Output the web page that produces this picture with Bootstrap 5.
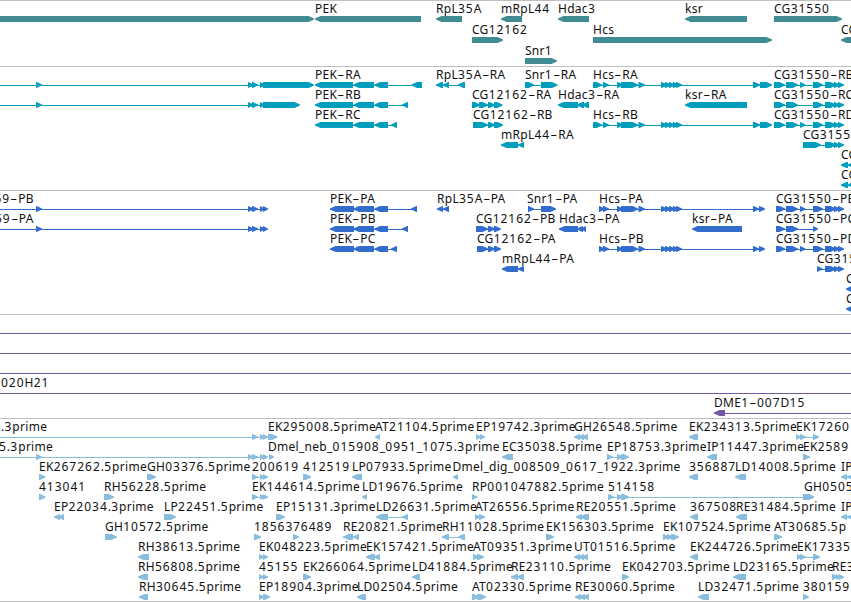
<!DOCTYPE html>
<html lang="en">
<head>
    <meta charset="UTF-8">
    <meta name="viewport" content="width=device-width, initial-scale=1.0">
    <title>Genome Browser</title>
    <!-- Bootstrap CSS -->
    <link href="https://cdn.jsdelivr.net/npm/bootstrap@5.3.0/dist/css/bootstrap.min.css" rel="stylesheet">
    <style>
        body {
            font-family: "Noto Sans", "Open Sans", sans-serif;
            font-size: 12px;
            line-height: 16px;
            color: #111;
        }
        .browser {
            width: 851px;
            height: 602px;
            border-bottom: 1px solid #bfbfbf;
        }
        .track {
            border-top: 1px solid #bfbfbf;
        }
        .track-row {
            height: 20px;
        }
        .track-row svg {
            left: 0;
            top: 0;
            width: 851px;
            height: 22px;
        }
        .track-genes .track-row { height: 21px; }
        .track-genes { height: 66px; fill: #408c92; }
        .track-transcripts { height: 124px; fill: #009ebd; }
        .track-proteins { height: 124px; fill: #326ccc; }
        .track-bacs { height: 104px; fill: #7157a5; }
        .track-ests { height: 183px; fill: #88bddd; }
        .feature-name {
            top: 0;
            letter-spacing: 0.28px;
            z-index: 1;
        }
        .digits { letter-spacing: 0.98px; }
        .dash {
            display: inline-block;
            width: 8px;
            text-align: center;
            transform: scaleX(1.8);
        }
    </style>
</head>
<body class="bg-white overflow-hidden">
    <main class="browser d-flex flex-column overflow-hidden">
        <section id="genes" class="track track-genes"></section>
        <section id="transcripts" class="track track-transcripts"></section>
        <section id="proteins" class="track track-proteins"></section>
        <section id="bacs" class="track track-bacs"></section>
        <section id="ests" class="track track-ests"></section>
    </main>

    <!-- Bootstrap JS and Popper -->
    <script src="https://cdn.jsdelivr.net/npm/bootstrap@5.3.0/dist/js/bootstrap.bundle.min.js"></script>
    <script>
        // Exons shared by several transcripts
        const left = '-20--10 36-42 248-253.5 252-258';
        const pek = '353.5-374 374.5-388';
        const hcs = '603-609 617-623 621-638 638.5-645 661-667 665-671 669-675 673-679 676-682';
        const tail = '825-836 834-840 838-844';
        const cg = '786-798 800-805.5 813-823 ' + tail;

        // One string per row, features split by ";": name | strand | exons | label x
        const tracks = {
            genes: [
                '|>|-20-314; PEK|<|315-421; RpL35A|<|436-462; mRpL44|<|501-522; Hdac3|<|558-589; ksr|<|685-747; CG31550|>|774-842',
                'CG12162|>|472-503; Hcs|>|593-772; CG|<|841-870',
                'Snr1|>|525-557'
            ],
            transcripts: [
                `|>|${left} 260-265 263-314; PEK-RA|<|315-353 ${pek} 411.5-422; RpL35A-RA|<|436-443 443-449 458-465; Snr1-RA|>|525-534 541-557.5; Hcs-RA|>|593-602 ${hcs} 753-760 760-772; CG31550-RB|>|774-785 ${cg}`,
                `|>|${left} 260-265 263-300; PEK-RB|<|315-353 ${pek} 402-408; CG12162-RA|>|472-480 479-488 488-495 494-502.5; Hdac3-RA|<|558-578 577-584 582-589; ksr-RA|<|685-747; CG31550-RC|>|774-785 786-798 813-823 ${tail}`,
                `PEK-RC|<|315-353 ${pek} 391-397; CG12162-RB|>|473-488 488-495 494-503; Hcs-RB|>|593-602 ${hcs} 753-760 760-772; CG31550-RD|>|774-785 ${cg}`,
                `mRpL44-RA|<|501-518 518-524; CG31550-RA|>|803-821 ${tail}`,
                'CG|<|841-848 848-860',
                'CG|<|841-848 848-860'
            ],
            proteins: [
                `59-PB|>|${left} 260-265 263-268|-5.5; PEK-PA|<|330-354 ${pek} 411-417; RpL35A-PA|<|437-443 443-449; Snr1-PA|>|528-534 541-556|527; Hcs-PA|>|599-605 ${hcs} 753-759 759-765; CG31550-PB|>|776-785 ${cg}`,
                `59-PA|>|${left} 260-265 263-268|-5; PEK-PB|<|330-354 ${pek} 402-408; CG12162-PB|>|476-488 488-495 494-501; Hdac3-PA|<|559-578 577-583 581-586; ksr-PA|<|692-742; CG31550-PC|>|776-785 786-798 813-818`,
                `PEK-PC|<|330-354 ${pek} 391-397; CG12162-PA|>|477-488 488-495 494-501; Hcs-PB|>|599-605 ${hcs} 753-759 759-765; CG31550-PD|>|776-785 ${cg}`,
                `mRpL44-PA|<|502-518 518-524; CG31550-PA|>|817-822.5 ${tail}`,
                'CG|<|846-853',
                'CG|<|846-853'
            ],
            bacs: [
                '|>|-20--10 870-880',
                '|>|-20--10 870-880',
                '|>|-20--10 870-880',
                '020H21|>|-20--10 870-880|1',
                'DME1-007D15|<|714-725 870-880'
            ],
            ests: [
                '.3prime|>|-20--10 252-258 260-265 263-268|1; EK295008.5prime|>|268-277.5; AT21104.5prime|<|375-380; EP19742.3prime|>|476-481 480-485; GH26548.5prime|<|574-580 578-584 582-588; EK234313.5prime|<|689-698; EK17260|>|796-801 800-806 813-819',
                `5.3prime|>|${left} 260-265 263-268|-1; Dmel_neb_015908_0951_1075.3prime|>|269-274|268; EC35038.5prime|<|502-513; EP18753.3prime|>|607-613 617-623 621-629; IP11447.3prime|<|707-717; EK2589|>|803-810`,
                'EK267262.5prime|>|39-45.5; GH03376.5prime|>|147-156; 200619|>|252-258 260-265 263-268; 412519|>|303-311; LP07933.5prime|<|352-362; Dmel_dig_008509_0617_1922.3prime|<|453-458|452.5; 356887|<|689-698; LD14008.5prime|<|735-746; IP|<|841-847 847-860',
                '413041|>|39-45.5; RH56228.5prime|>|104-114; EK144614.5prime|>|252-258 260-265 263-268; LD19676.5prime|<|362-367; RP001047882.5prime|>|472-477.5; 514158|>|608-614 617-623 621-629 803-814; GH0505|>|804-814',
                'EP22034.3prime|<|54-60 58-64; LP22451.5prime|>|164-176; EP15131.3prime|>|276-285; LD26631.5prime|<|376-388 402-408; AT26556.5prime|>|475-480 479-485; RE20551.5prime|<|576-582 580-589; 367508|<|690-698; RE31484.5prime|<|736-747; IP|<|841-847 847-860',
                'GH10572.5prime|>|105-117; 18563|>|254-261; 76489|>|293-299; RE20821.5prime|<|343-353 353-359; RH11028.5prime|<|442-449 458-465; EK156303.5prime|>|546-554; EK107524.5prime|>|663-669 667-673 671-679; AT30685.5p|>|774-782',
                'RH38613.5prime|<|138-149; EK048223.5prime|>|259-264 263-268; EK157421.5prime|<|366-375 374-380; AT09351.3prime|>|473-479 477-484; UT01516.5prime|<|574-580 578-584 582-588; EK244726.5prime|<|690-698; EK17335|>|797-802 800-806 813-820',
                'RH56808.5prime|<|138-148; 45155|>|259-264 263-268; EK266064.5prime|>|303-311; LD41884.5prime|<|412-420; RE23110.5prime|<|511-518 517-524; EK042703.5prime|>|622-629; LD23165.5prime|<|733-746; RE3|>|832-838 836-841 839-844',
                'RH30645.5prime|<|139-148; EP18904.3prime|>|259-264 263-270; LD02504.5prime|<|357-366; AT02330.5prime|>|472-479 477-486; RE30060.5prime|<|575-581 579-585 583-589; LD32471.5prime|<|698-709; 380159|>|803-809'
            ]
        };

        // Bar with a blunt arrow head pointing along the strand
        function drawExon(a, b, strand) {
            const back = strand === '>' ? a : b;
            const tip = strand === '>' ? b : a;
            const dir = strand === '>' ? -1 : 1;
            const neck = tip + dir * Math.min(5.5, b - a);
            const nose = tip + dir;
            return `<polygon points="${back},15 ${neck},15 ${nose},17 ${tip},17.5 ${tip},18.5 ${nose},19 ${neck},21 ${back},21"/>`;
        }

        function drawName(name, x) {
            const text = name.replace(/\d+/g, '<span class="digits">$&</span>')
                             .replace('-', '<span class="dash">-</span>');
            return `<span class="feature-name position-absolute text-nowrap" style="left: ${x}px">${text}</span>`;
        }

        function drawRow(row) {
            let names = '';
            let shapes = '';
            row.split(';').forEach(item => {
                const [name, strand, exonText, labelX] = item.trim().split('|');
                const exons = exonText.split(' ').map(e => e.match(/^(-?[\d.]+)-(-?[\d.]+)$/).slice(1).map(Number));
                const start = exons[0][0];
                const end = exons[exons.length - 1][1];
                if (exons.length > 1) {
                    shapes += `<rect x="${start}" y="18" width="${end - start - 1}" height="1"/>`;
                }
                exons.forEach(e => shapes += drawExon(e[0], e[1], strand));
                if (name) {
                    names += drawName(name, labelX !== undefined ? labelX : start);
                }
            });
            return `<div class="track-row position-relative">${names}<svg class="position-absolute">${shapes}</svg></div>`;
        }

        for (const id in tracks) {
            document.getElementById(id).innerHTML = tracks[id].map(drawRow).join('');
        }
    </script>
</body>
</html>
